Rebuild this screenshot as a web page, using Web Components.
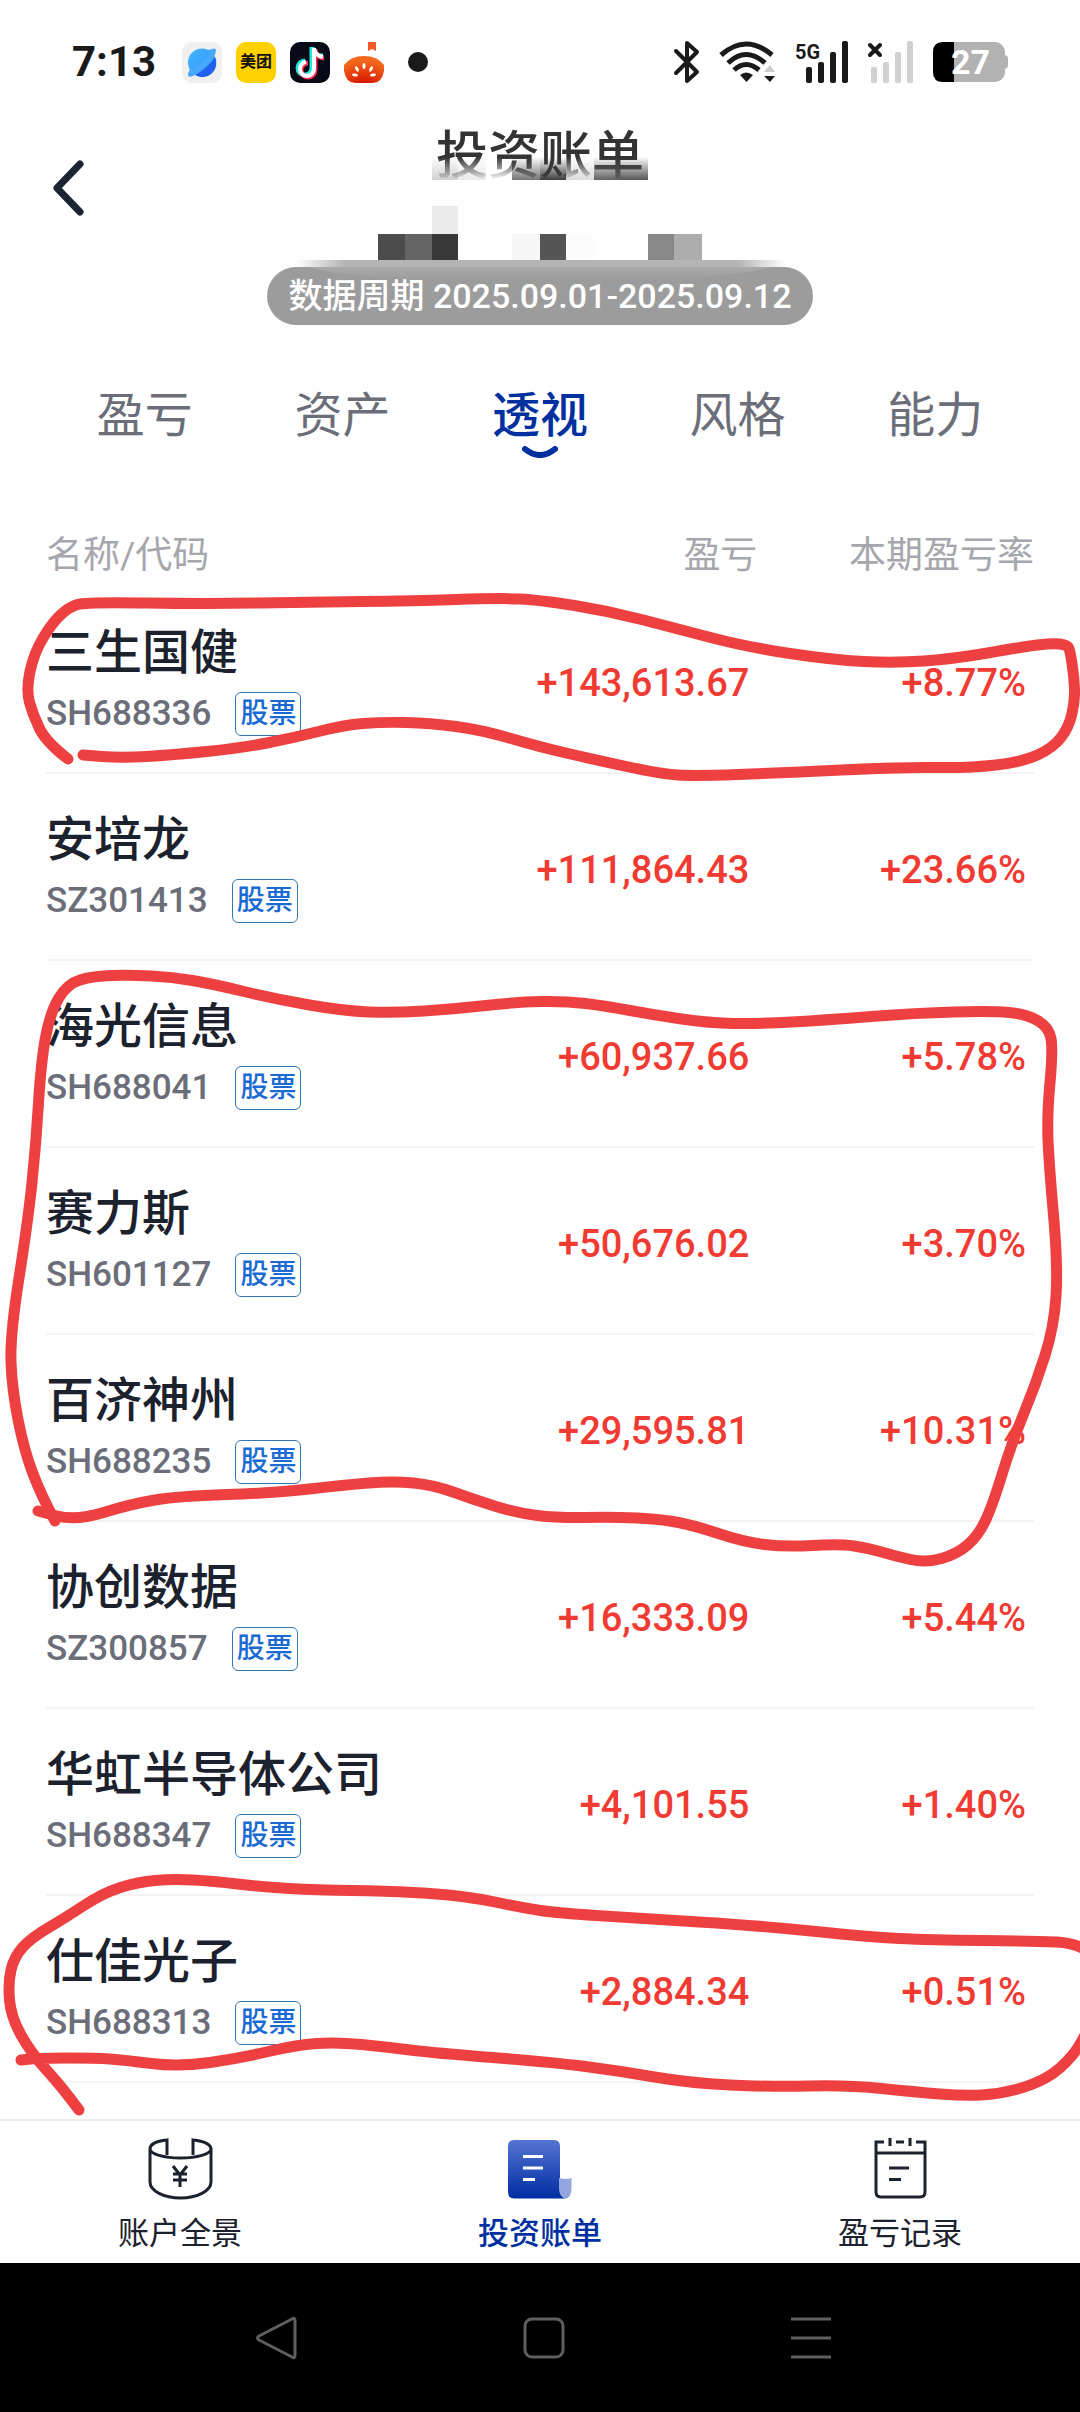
<!DOCTYPE html>
<html lang="zh-CN">
<head>
<meta charset="utf-8">
<meta name="viewport" content="width=device-width, initial-scale=1">
<title>投资账单</title>
<style>
  body {
    margin: 0;
    background: #fefefe;
    color: #1b212d;
    font-family: Roboto, "Noto Sans CJK SC", sans-serif;
  }
</style>
</head>
<body>
<bill-page>
  <status-bar slot="status" time="7:13"></status-bar>
  <bill-header slot="header" period="2025.09.01-2025.09.12">投资账单</bill-header>
  <bill-tabs slot="tabs" items="盈亏,资产,透视,风格,能力" active="透视"></bill-tabs>
  <holdings-table></holdings-table>
  <app-nav slot="nav">
    <nav-item label="账户全景">
      <svg width="68" height="64" viewBox="146 2137 68 64" fill="none" stroke="#1b212d" stroke-width="3">
        <path d="M167 2155V2140C155 2141 150 2145 150 2149C150 2154 164 2158 180.500 2158S211 2154 211 2149C211 2145 205 2141 193 2140V2155M150 2149V2182C150 2191 164 2198 180.500 2198S211 2191 211 2182V2149"/>
        <path d="M173 2166L180 2175L187 2166M180 2175V2187M173 2174H187M173 2180H187"/>
      </svg>
    </nav-item>
    <nav-item label="投资账单" active>
      <svg width="68" height="64" viewBox="506 2137 68 64">
        <defs>
          <linearGradient id="sheet" x1="0" y1="0" x2="0" y2="1">
            <stop offset="0" stop-color="#5474d2"/>
            <stop offset="1" stop-color="#002da3"/>
          </linearGradient>
        </defs>
        <path fill="url(#sheet)" d="M514 2140H554Q560 2140 560 2146V2190Q560 2197 566 2198.500H514Q508 2198.500 508 2192V2146Q508 2140 514 2140Z"/>
        <path fill="#93a5dc" d="M559 2178Q566 2180 571.500 2178V2188Q571.500 2198 565.500 2198.500Q559 2197 559 2188Z"/>
        <path stroke="#fff" stroke-width="3" d="M523 2156.500H543M523 2168H543M523 2179.500H535"/>
      </svg>
    </nav-item>
    <nav-item label="盈亏记录">
      <svg width="68" height="64" viewBox="866 2137 68 64" fill="none" stroke="#1b212d" stroke-width="3">
        <path d="M884 2142H876V2192Q876 2197 881 2197H920Q925 2197 925 2192V2142H916M876 2153H925M896 2142H904M890 2138V2146M910 2138V2146"/>
        <path d="M889 2168H909M889 2179.500H901"/>
      </svg>
    </nav-item>
  </app-nav>
  <system-nav slot="system"></system-nav>
  <ink-layer slot="ink"></ink-layer>
</bill-page>

<script>
/**
 * Attaches an open shadow root and fills it with the element's own markup.
 */
class BaseElement extends HTMLElement {
  constructor() {
    super();
    this.attachShadow({ mode: 'open' });
  }

  connectedCallback() {
    this.shadowRoot.innerHTML = this.render();
  }
}

class BillPage extends BaseElement {
  render() {
    return `
      <style>
        :host {
          display: flex;
          flex-direction: column;
          position: relative;
          min-height: 100vh;
        }

        main {
          flex: 1;
        }
      </style>

      <slot name="status"></slot>
      <slot name="header"></slot>
      <slot name="tabs"></slot>
      <main><slot></slot></main>
      <slot name="nav"></slot>
      <slot name="system"></slot>
      <slot name="ink"></slot>
    `;
  }
}

class StatusBar extends BaseElement {
  render() {
    return `
      <style>
        :host {
          display: flex;
          align-items: center;
          justify-content: space-between;
          height: 124px;
          padding: 0 72px;
          color: #1a1a1a;
        }

        .group {
          display: flex;
          align-items: center;
          gap: 14px;
        }

        .group.system {
          gap: 19px;
        }

        time {
          min-width: 96px;
          font-size: 42px;
          line-height: 48px;
          font-weight: 700;
        }

        .meituan {
          display: grid;
          place-items: center;
          width: 40px;
          height: 41px;
          border-radius: 10px;
          background: #ffd100;
          color: #111;
          font-size: 16px;
          line-height: 20px;
          font-weight: 700;
        }

        .dot {
          width: 20px;
          height: 20px;
          margin-left: 10px;
          border-radius: 50%;
          background: #1a1a1a;
        }

        svg {
          display: block;
          overflow: visible;
        }

        text {
          font-weight: 700;
        }
      </style>

      <div class="group">
        <time>${this.getAttribute('time')}</time>
        <svg width="40" height="41" viewBox="0 0 40 41">
          <defs>
            <linearGradient id="planet" x1="0" y1="0" x2="1" y2="1">
              <stop offset="0" stop-color="#43b6ff"/>
              <stop offset="1" stop-color="#2f90fa"/>
            </linearGradient>
          </defs>
          <rect width="40" height="41" rx="10" fill="#f0f0f0"/>
          <circle cx="20" cy="20.500" r="14" fill="url(#planet)"/>
          <path d="M33 15A14 14 0 0 1 13 33Q25 27 33 15Z" fill="#205ff0"/>
          <path d="M26 8Q34 5 34 8Q34 14 27 21Q19 30 11 34Q6 36 6 33Q6 31 8 27Q10 28 15 24Q24 18 28 12Q28 9 26 8Z" fill="#48a8fb"/>
        </svg>
        <span class="meituan">美团</span>
        <svg width="40" height="41" viewBox="0 0 40 41" fill="none" stroke-width="5">
          <rect width="40" height="41" rx="10" fill="#090a17"/>
          <path d="M22 5V26A7 7 0 1 1 15 19M22 6Q24 14 33 14" stroke="#25e5df"/>
          <path d="M25 7V28A7 7 0 1 1 18 21M25 8Q27 16 34 16" stroke="#fb2d55"/>
          <path d="M24 6V27A7 7 0 1 1 16 20M24 7Q26 14 33 15" stroke="#fff" stroke-width="4"/>
        </svg>
        <svg width="40" height="41" viewBox="0 0 40 41">
          <defs>
            <radialGradient id="melon" cx=".5" cy="1" r=".8">
              <stop offset="0" stop-color="#d31200"/>
              <stop offset="1" stop-color="#f4661b"/>
            </radialGradient>
          </defs>
          <path d="M24 0H32V9L28 7L24 9Z" fill="#ef5a27"/>
          <path d="M0 23Q7 14 20 14T40 23V29Q38 41 29 41H11Q2 41 0 29Z" fill="url(#melon)"/>
          <g fill="#fff">
            <ellipse cx="20" cy="24" rx="1.500" ry="3"/>
            <ellipse cx="13" cy="27" rx="1.500" ry="3" transform="rotate(-30 13 27)"/>
            <ellipse cx="27" cy="27" rx="1.500" ry="3" transform="rotate(30 27 27)"/>
            <ellipse cx="11" cy="33" rx="3" ry="1.500" transform="rotate(10 11 33)"/>
            <ellipse cx="29" cy="33" rx="3" ry="1.500" transform="rotate(-10 29 33)"/>
          </g>
        </svg>
        <span class="dot"></span>
      </div>

      <div class="group system">
        <svg width="26" height="42" viewBox="0 0 26 42" fill="none" stroke="#1a1a1a" stroke-width="4" stroke-linecap="round" stroke-linejoin="round">
          <path d="M2 10L23 31L13 40V2L23 11L2 32"/>
        </svg>
        <svg width="57" height="42" viewBox="0 0 57 42" fill="none" stroke="#1a1a1a" stroke-width="5">
          <path d="M2 14Q27 -8 53 14M9 22Q27 5 46 22M15 29Q27 18 40 29"/>
          <path d="M21 34Q27 29 34 34L27.500 41Z" fill="#1a1a1a" stroke="none"/>
          <path d="M45 31L51 24L56 31Z" fill="#ccc" stroke="none"/>
          <path d="M45 35H56L51 41Z" fill="#1a1a1a" stroke="none"/>
        </svg>
        <svg width="54" height="42" viewBox="0 0 54 42" fill="#1a1a1a">
          <text x="0" y="18" font-size="20">5G</text>
          <rect x="11" y="26" width="6" height="16" rx="2"/>
          <rect x="23" y="21" width="6" height="21" rx="2"/>
          <rect x="35" y="11" width="6" height="31" rx="2"/>
          <rect x="47" y="0" width="6" height="42" rx="2"/>
        </svg>
        <svg width="46" height="42" viewBox="0 0 46 42" fill="#d0d0d0">
          <path d="M2 4L12 14M12 4L2 14" stroke="#1a1a1a" stroke-width="4" stroke-linecap="round"/>
          <rect x="3" y="26" width="6" height="16" rx="2"/>
          <rect x="15" y="21" width="6" height="21" rx="2"/>
          <rect x="27" y="11" width="6" height="31" rx="2"/>
          <rect x="39" y="0" width="6" height="42" rx="2"/>
        </svg>
        <svg width="75" height="40" viewBox="0 0 75 40">
          <rect width="72" height="40" rx="10" fill="#b2b2b2"/>
          <path d="M71 13Q75 13 75 17V23Q75 27 71 27Z" fill="#b2b2b2"/>
          <path d="M21 0V40H10Q0 40 0 30V10Q0 0 10 0Z"/>
          <text x="18" y="32" font-size="34" fill="#fff">27</text>
        </svg>
      </div>
    `;
  }
}

class BillHeader extends BaseElement {
  /** Pixelated cells: x, y, width, height, colour. */
  get cells() {
    return [
      [432, 206, 26, 28, '#ebebeb'],
      [378, 234, 27, 26, '#4c4c4c'],
      [405, 234, 27, 26, '#646464'],
      [432, 234, 26, 26, '#383838'],
      [512, 234, 28, 26, '#f7f7f7'],
      [540, 234, 26, 26, '#555'],
      [566, 234, 28, 26, '#fcfcfc'],
      [648, 234, 26, 26, '#888'],
      [674, 234, 28, 26, '#adadad'],
    ];
  }

  /** Cells that fade in over the lower half of the title. */
  get fadedCells() {
    return [
      [432, 26, '#d0d0d0'],
      [458, 28, '#e8e8e8'],
      [486, 26, '#fff'],
      [512, 28, '#777'],
      [540, 26, '#3d3d3d'],
      [566, 28, '#dcdcdc'],
      [594, 26, '#606060'],
      [620, 28, '#555'],
    ];
  }

  render() {
    return `
      <style>
        :host {
          display: grid;
          grid-template-columns: 1fr auto 1fr;
          padding: 0 46px;
        }

        button {
          display: grid;
          place-items: center;
          width: 44px;
          height: 128px;
          padding: 0;
          border: 0;
          background: none;
        }

        .middle {
          display: flex;
          flex-direction: column;
          align-items: center;
          justify-content: space-between;
          position: relative;
          height: 201px;
        }

        h1 {
          margin: 0;
          color: #333;
          font-size: 52px;
          line-height: 66px;
          font-weight: 500;
        }

        p {
          margin: 0;
          padding: 0 22px;
          border-radius: 29px;
          background: #9c9c9c;
          color: #fff;
          font-size: 34px;
          line-height: 58px;
          font-weight: 500;
        }

        .mosaic {
          position: absolute;
          top: 32px;
          left: 50%;
          transform: translateX(-50%);
        }
      </style>

      <button aria-label="返回">
        <svg width="34" height="60" viewBox="0 0 34 60" fill="none" stroke="#1b2433" stroke-width="7" stroke-linecap="round" stroke-linejoin="round">
          <path d="M29 6L6 30L29 54"/>
        </svg>
      </button>
      <div class="middle">
        <h1><slot></slot></h1>
        <p>数据周期 ${this.getAttribute('period')}</p>
        <svg class="mosaic" width="500" height="130" viewBox="290 156 500 130" aria-hidden="true">
          <defs>
            <linearGradient id="down" x1="0" y1="0" x2="0" y2="1">
              <stop offset="0" stop-color="#fff" stop-opacity="0"/>
              <stop offset="1" stop-color="#fff"/>
            </linearGradient>
            <linearGradient id="edge">
              <stop offset="0" stop-color="#b4b4b4" stop-opacity="0"/>
              <stop offset=".1" stop-color="#b4b4b4"/>
              <stop offset=".9" stop-color="#b4b4b4"/>
              <stop offset="1" stop-color="#b4b4b4" stop-opacity="0"/>
            </linearGradient>
            <linearGradient id="lift" x1="0" y1="0" x2="0" y2="1">
              <stop offset="0" stop-color="#b8b8b8" stop-opacity=".5"/>
              <stop offset="1" stop-color="#b8b8b8" stop-opacity="0"/>
            </linearGradient>
            <mask id="fade">
              <rect x="432" y="157" width="216" height="23" fill="url(#down)"/>
            </mask>
          </defs>
          <g mask="url(#fade)">
            ${this.fadedCells.map(([x, w, fill]) => `<rect x="${x}" y="157" width="${w}" height="23" fill="${fill}"/>`).join('')}
          </g>
          <rect x="432" y="180" width="216" height="8" fill="#fefefe"/>
          ${this.cells.map(([x, y, w, h, fill]) => `<rect x="${x}" y="${y}" width="${w}" height="${h}" fill="${fill}"/>`).join('')}
          <rect x="296" y="260" width="490" height="7" fill="url(#edge)"/>
          <path d="M310 267H770Q740 280 540 280T310 267Z" fill="url(#lift)"/>
        </svg>
      </div>
    `;
  }
}

class BillTabs extends BaseElement {
  render() {
    const active = this.getAttribute('active');

    return `
      <style>
        :host {
          display: block;
          padding: 57px 46px 0;
        }

        nav {
          display: grid;
          grid-auto-flow: column;
          grid-auto-columns: 1fr;
        }

        button {
          display: flex;
          flex-direction: column;
          align-items: center;
          height: 76px;
          padding: 0;
          border: 0;
          background: none;
          color: #6b6e79;
          font: inherit;
          font-size: 48px;
          line-height: 68px;
        }

        button[aria-current] {
          color: #0030a0;
          font-weight: 500;
        }

        svg {
          margin-top: -4px;
        }
      </style>

      <nav>
        ${this.getAttribute('items').split(',').map(item => item === active ? `
          <button aria-current="page">${item}
            <svg width="36" height="12" viewBox="0 0 36 12" fill="none" stroke="#0030a0" stroke-width="6" stroke-linecap="round">
              <path d="M3 3Q18 15 33 3"/>
            </svg>
          </button>` : `
          <button>${item}</button>`).join('')}
      </nav>
    `;
  }
}

class HoldingsTable extends BaseElement {
  get rows() {
    return [
      ['三生国健', 'SH688336', '+143,613.67', '+8.77%'],
      ['安培龙', 'SZ301413', '+111,864.43', '+23.66%'],
      ['海光信息', 'SH688041', '+60,937.66', '+5.78%'],
      ['赛力斯', 'SH601127', '+50,676.02', '+3.70%'],
      ['百济神州', 'SH688235', '+29,595.81', '+10.31%'],
      ['协创数据', 'SZ300857', '+16,333.09', '+5.44%'],
      ['华虹半导体公司', 'SH688347', '+4,101.55', '+1.40%'],
      ['仕佳光子', 'SH688313', '+2,884.34', '+0.51%'],
    ];
  }

  render() {
    return `
      <style>
        :host {
          display: block;
          padding: 67px 46px 0;
        }

        table {
          width: 100%;
          table-layout: fixed;
          border-collapse: separate;
          border-spacing: 0;
        }

        th {
          height: 62px;
          padding: 0;
          color: #a6a7ad;
          font-size: 37px;
          line-height: 62px;
          font-weight: 400;
          text-align: right;
        }

        th:first-child {
          text-align: left;
        }

        .profit,
        .rate {
          width: 28%;
        }

        td {
          padding: 34px 0 35px;
          border-bottom: 2px solid #f3f3f4;
        }

        .name {
          font-size: 48px;
          line-height: 64px;
          font-weight: 500;
        }

        .meta {
          display: flex;
          align-items: center;
          gap: 24px;
          margin-top: 6px;
          color: #6b6e79;
          font-size: 35px;
          line-height: 46px;
          font-weight: 500;
        }

        .tag {
          box-sizing: border-box;
          height: 44px;
          padding: 0 4px;
          border: 1px solid #3477b5;
          border-radius: 6px;
          color: #1a6ad4;
          font-size: 28px;
          line-height: 42px;
        }

        .value {
          padding: 38px 8px 31px 0;
          color: #f03a32;
          font-size: 38px;
          line-height: 48px;
          font-weight: 500;
          text-align: right;
        }
      </style>

      <table>
        <thead>
          <tr>
            <th scope="col">名称/代码</th>
            <th scope="col" class="profit">盈亏</th>
            <th scope="col" class="rate">本期盈亏率</th>
          </tr>
        </thead>
        <tbody>
          ${this.rows.map(([name, code, profit, rate]) => `
            <tr>
              <td>
                <div class="name">${name}</div>
                <div class="meta">${code}<span class="tag">股票</span></div>
              </td>
              <td class="value">${profit}</td>
              <td class="value">${rate}</td>
            </tr>
          `).join('')}
        </tbody>
      </table>
    `;
  }
}

class AppNav extends BaseElement {
  render() {
    return `
      <style>
        :host {
          display: block;
          border-top: 2px solid #ececec;
        }

        nav {
          display: grid;
          grid-template-columns: repeat(3, 1fr);
          height: 142px;
        }
      </style>

      <nav><slot></slot></nav>
    `;
  }
}

class NavItem extends BaseElement {
  render() {
    return `
      <style>
        :host {
          display: block;
        }

        a {
          display: flex;
          flex-direction: column;
          align-items: center;
          gap: 10px;
          padding-top: 16px;
          color: #1b212d;
          font-size: 31px;
          line-height: 46px;
          text-decoration: none;
        }

        :host([active]) a {
          color: #0030a0;
          font-weight: 500;
        }

        ::slotted(svg) {
          display: block;
        }
      </style>

      <a href="#"><slot></slot>${this.getAttribute('label')}</a>
    `;
  }
}

class SystemNav extends BaseElement {
  render() {
    return `
      <style>
        :host {
          display: block;
          background: #000;
        }

        nav {
          display: grid;
          grid-template-columns: repeat(3, 1fr);
          height: 149px;
          padding: 0 136px 0 143px;
        }

        button {
          padding: 0;
          border: 0;
          background: none;
        }

        svg {
          display: block;
          margin: auto;
        }
      </style>

      <nav>
        <button aria-label="返回">
          <svg width="44" height="44" viewBox="0 0 44 44" fill="none" stroke="#5f5f5f" stroke-width="3" stroke-linejoin="round">
            <path d="M37 3Q40 1 40 5V39Q40 43 37 41L4 24Q1 22 4 20Z"/>
          </svg>
        </button>
        <button aria-label="主页">
          <svg width="44" height="44" viewBox="0 0 44 44" fill="none" stroke="#5f5f5f" stroke-width="3">
            <rect x="3" y="3" width="38" height="38" rx="7"/>
          </svg>
        </button>
        <button aria-label="最近任务">
          <svg width="44" height="44" viewBox="0 0 44 44" stroke="#5f5f5f" stroke-width="3">
            <path d="M2 3H42M2 22H42M2 41H42"/>
          </svg>
        </button>
      </nav>
    `;
  }
}

/**
 * Freehand marker strokes drawn over the page.
 */
class InkLayer extends BaseElement {
  get strokes() {
    return [
      '68,759 46,742 33,715 26,690 34,653 52,623 69,607 86,602 207,604 310,602 413,601 499,598 540,600 609,611 678,629 747,647 833,660 895,663 953,659 1022,647 1053,643 1067,645 1070,650 1074,677 1075,700 1069,727 1053,748 1022,762 970,768 902,767 781,773 695,776 661,774 592,759 540,747 482,730 430,723 382,722 344,725 293,738 241,748 172,755 121,758 83,755',
      '55,1521 41,1495 24,1450 12,1389 10,1335 28,1221 36,1144 41,1062 50,1013 67,984 93,976 131,975 172,977 213,984 275,999 344,1011 393,1013 455,1009 517,1002 565,1001 606,1006 654,1015 709,1023 758,1024 826,1020 916,1013 992,1011 1026,1014 1049,1027 1053,1050 1047,1115 1049,1164 1058,1266 1054,1327 1036,1384 1012,1442 992,1507 978,1536 957,1554 926,1563 895,1556 868,1548 840,1544 785,1547 744,1542 696,1526 661,1519 613,1517 558,1518 517,1513 475,1500 434,1485 393,1481 344,1485 275,1493 179,1496 131,1504 76,1521 38,1511',
      '79,2110 62,2087 31,2053 11,2017 8,1983 14,1957 31,1938 65,1918 103,1893 138,1882 172,1879 213,1881 262,1887 317,1890 386,1891 441,1894 482,1899 523,1908 558,1913 634,1918 764,1926 868,1937 930,1940 1033,1941 1080,1943 1110,1970 1085,2040 1060,2070 1033,2085 999,2094 964,2096 916,2092 847,2085 771,2087 689,2083 620,2071 551,2062 434,2053 386,2047 337,2042 296,2045 241,2058 179,2067 124,2060 96,2058 41,2058 21,2060',
    ];
  }

  /** Joins the midpoints of the segments with quadratic curves. */
  toPath(stroke) {
    const points = stroke.split(' ').map(pair => pair.split(',').map(Number));
    const last = points[points.length - 1];
    let d = `M${points[0]}`;

    for (let i = 1; i < points.length - 1; i++) {
      const [x, y] = points[i];
      const [nextX, nextY] = points[i + 1];
      d += `Q${x} ${y} ${(x + nextX) / 2} ${(y + nextY) / 2}`;
    }

    return `${d}L${last}`;
  }

  render() {
    return `
      <style>
        :host {
          display: block;
          position: absolute;
          inset: 0;
          overflow: hidden;
          pointer-events: none;
        }

        svg {
          display: block;
          width: 100%;
        }
      </style>

      <svg viewBox="0 0 1080 2412" fill="none" stroke="#ee4040" stroke-width="11" stroke-linecap="round" stroke-linejoin="round" aria-hidden="true">
        ${this.strokes.map(stroke => `<path d="${this.toPath(stroke)}"/>`).join('')}
      </svg>
    `;
  }
}

customElements.define('bill-page', BillPage);
customElements.define('status-bar', StatusBar);
customElements.define('bill-header', BillHeader);
customElements.define('bill-tabs', BillTabs);
customElements.define('holdings-table', HoldingsTable);
customElements.define('app-nav', AppNav);
customElements.define('nav-item', NavItem);
customElements.define('system-nav', SystemNav);
customElements.define('ink-layer', InkLayer);
</script>
</body>
</html>
